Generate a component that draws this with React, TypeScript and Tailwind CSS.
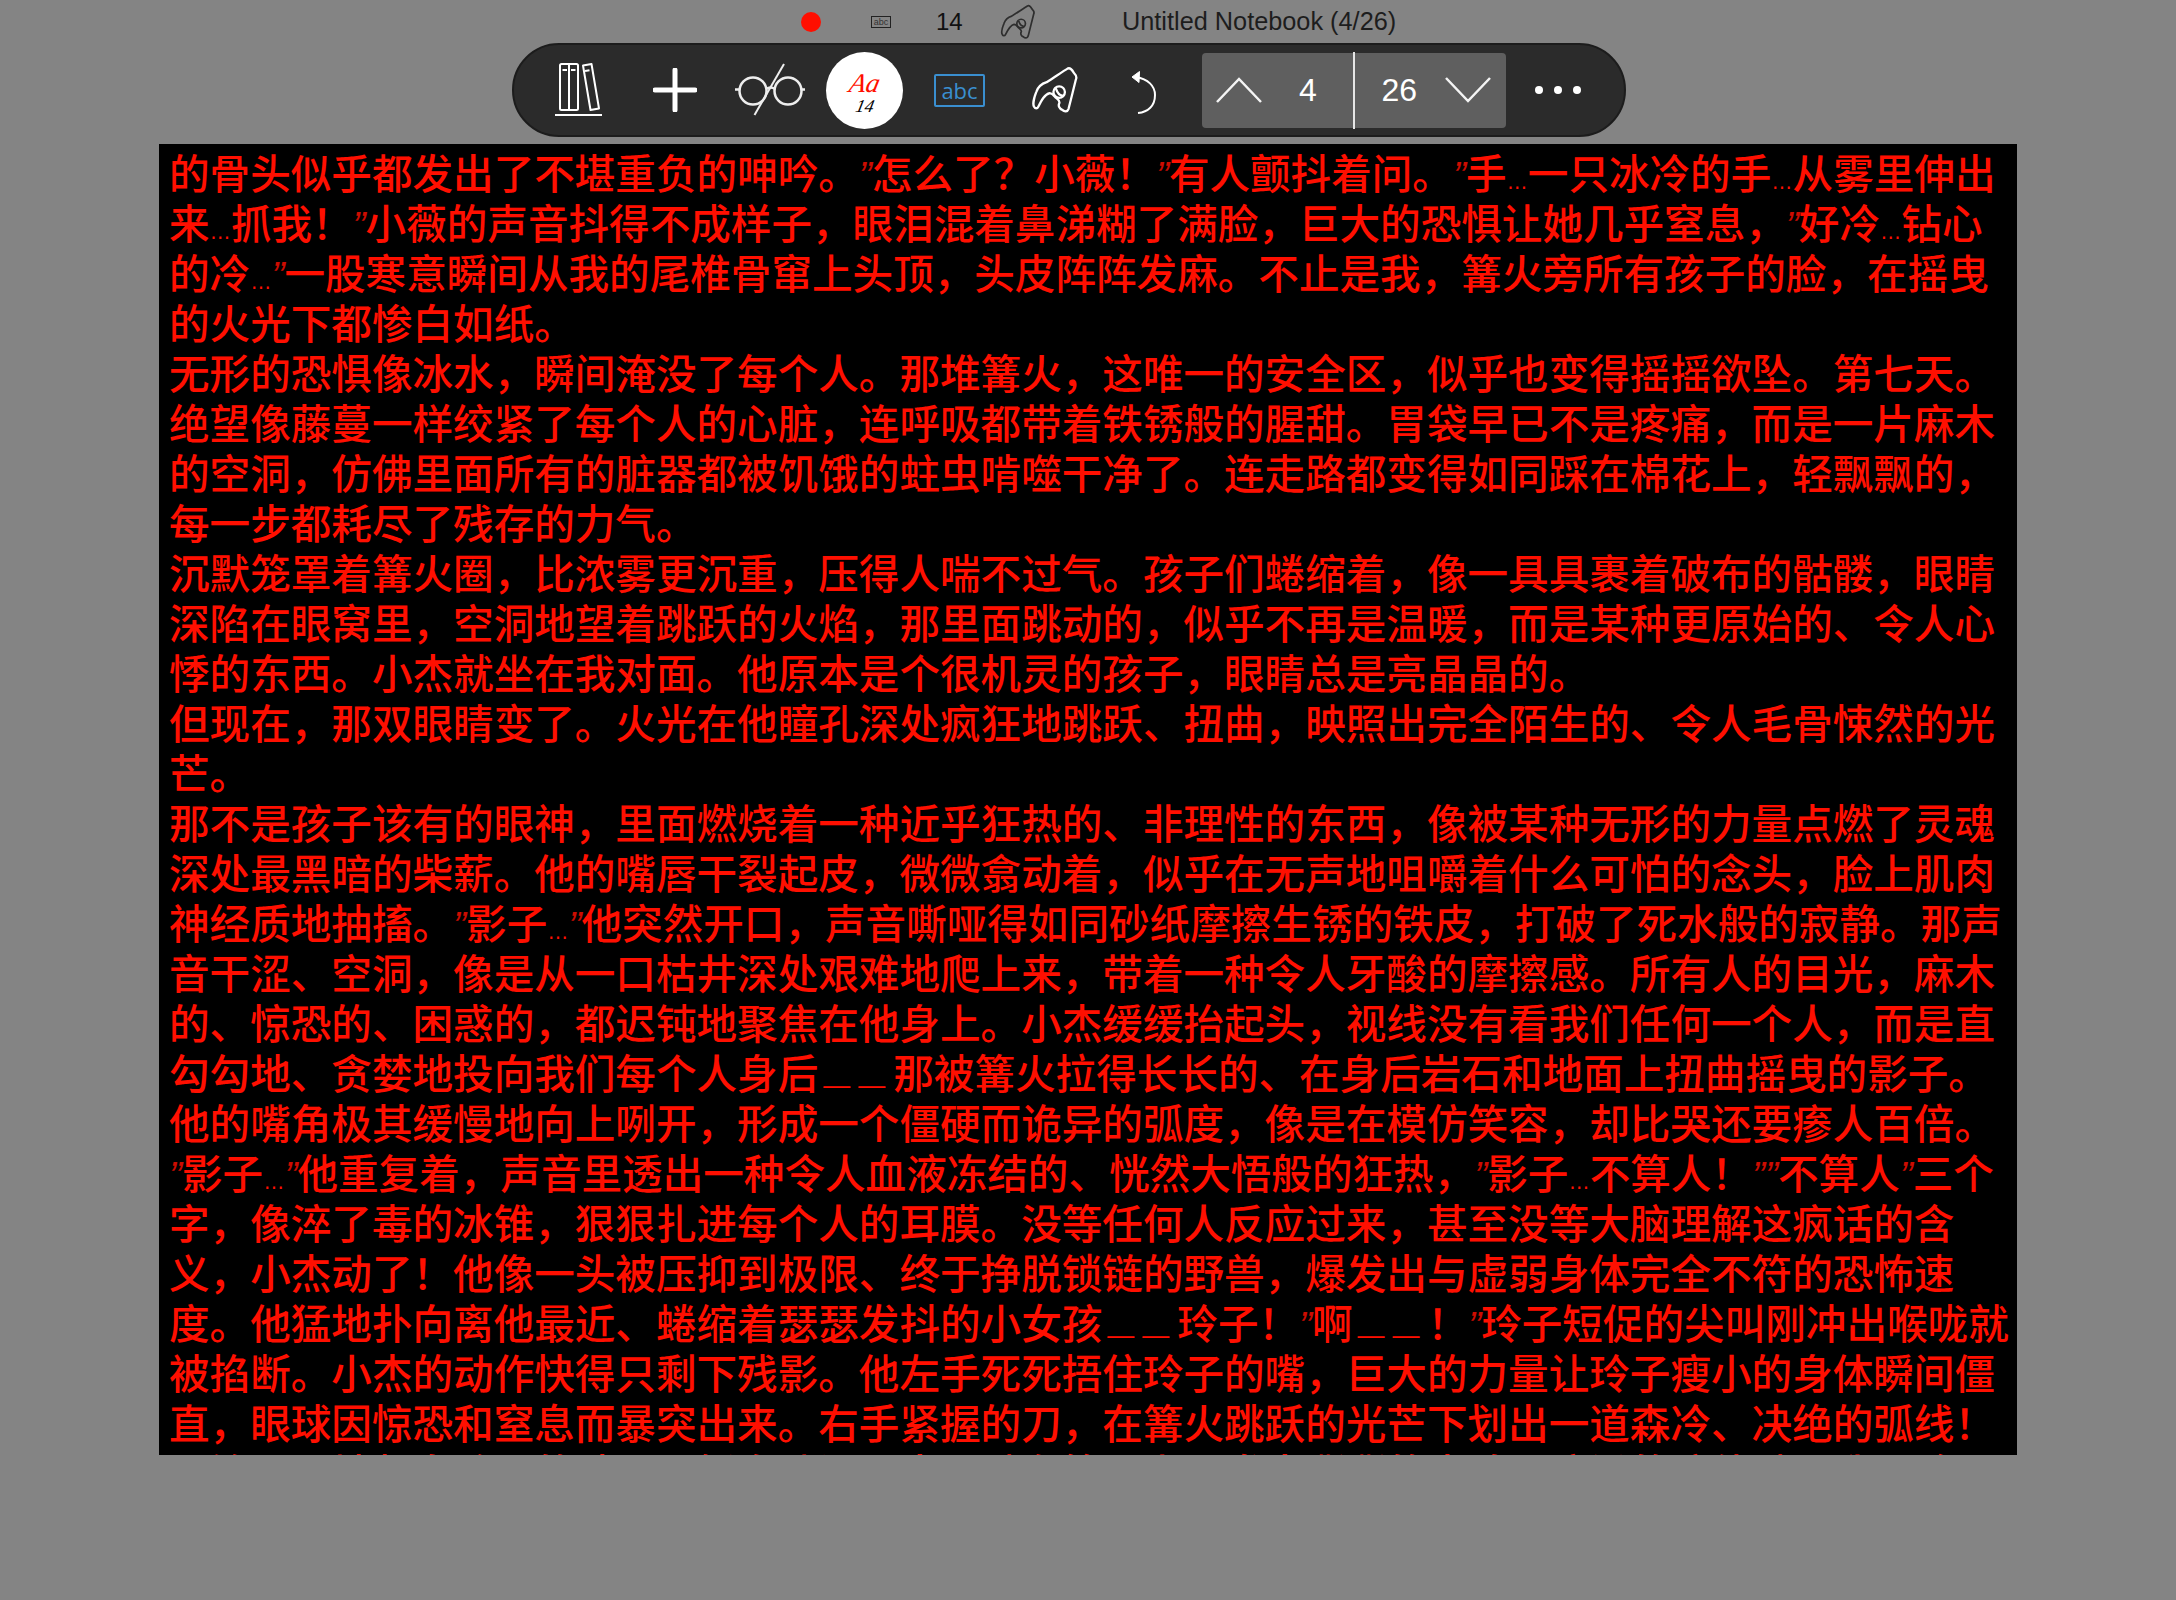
import React from "react";

const LINES = [
  "的骨头似乎都发出了不堪重负的呻吟。“怎么了？小薇！”有人颤抖着问。“手…一只冰冷的手…从雾里伸出",
  "来…抓我！”小薇的声音抖得不成样子，眼泪混着鼻涕糊了满脸，巨大的恐惧让她几乎窒息，“好冷…钻心",
  "的冷…”一股寒意瞬间从我的尾椎骨窜上头顶，头皮阵阵发麻。不止是我，篝火旁所有孩子的脸，在摇曳",
  "的火光下都惨白如纸。",
  "无形的恐惧像冰水，瞬间淹没了每个人。那堆篝火，这唯一的安全区，似乎也变得摇摇欲坠。第七天。",
  "绝望像藤蔓一样绞紧了每个人的心脏，连呼吸都带着铁锈般的腥甜。胃袋早已不是疼痛，而是一片麻木",
  "的空洞，仿佛里面所有的脏器都被饥饿的蛀虫啃噬干净了。连走路都变得如同踩在棉花上，轻飘飘的，",
  "每一步都耗尽了残存的力气。",
  "沉默笼罩着篝火圈，比浓雾更沉重，压得人喘不过气。孩子们蜷缩着，像一具具裹着破布的骷髅，眼睛",
  "深陷在眼窝里，空洞地望着跳跃的火焰，那里面跳动的，似乎不再是温暖，而是某种更原始的、令人心",
  "悸的东西。小杰就坐在我对面。他原本是个很机灵的孩子，眼睛总是亮晶晶的。",
  "但现在，那双眼睛变了。火光在他瞳孔深处疯狂地跳跃、扭曲，映照出完全陌生的、令人毛骨悚然的光",
  "芒。",
  "那不是孩子该有的眼神，里面燃烧着一种近乎狂热的、非理性的东西，像被某种无形的力量点燃了灵魂",
  "深处最黑暗的柴薪。他的嘴唇干裂起皮，微微翕动着，似乎在无声地咀嚼着什么可怕的念头，脸上肌肉",
  "神经质地抽搐。“影子…”他突然开口，声音嘶哑得如同砂纸摩擦生锈的铁皮，打破了死水般的寂静。那声",
  "音干涩、空洞，像是从一口枯井深处艰难地爬上来，带着一种令人牙酸的摩擦感。所有人的目光，麻木",
  "的、惊恐的、困惑的，都迟钝地聚焦在他身上。小杰缓缓抬起头，视线没有看我们任何一个人，而是直",
  "勾勾地、贪婪地投向我们每个人身后——那被篝火拉得长长的、在身后岩石和地面上扭曲摇曳的影子。",
  "他的嘴角极其缓慢地向上咧开，形成一个僵硬而诡异的弧度，像是在模仿笑容，却比哭还要瘆人百倍。",
  "“影子…”他重复着，声音里透出一种令人血液冻结的、恍然大悟般的狂热，“影子…不算人！”“不算人”三个",
  "字，像淬了毒的冰锥，狠狠扎进每个人的耳膜。没等任何人反应过来，甚至没等大脑理解这疯话的含",
  "义，小杰动了！他像一头被压抑到极限、终于挣脱锁链的野兽，爆发出与虚弱身体完全不符的恐怖速",
  "度。他猛地扑向离他最近、蜷缩着瑟瑟发抖的小女孩——玲子！“啊——！”玲子短促的尖叫刚冲出喉咙就",
  "被掐断。小杰的动作快得只剩下残影。他左手死死捂住玲子的嘴，巨大的力量让玲子瘦小的身体瞬间僵",
  "直，眼球因惊恐和窒息而暴突出来。右手紧握的刀，在篝火跳跃的光芒下划出一道森冷、决绝的弧线！",
  "刀锋狠狠地刺向玲子的脖颈，鲜血喷涌而出，溅在篝火上，发出嘶嘶的声响，滚烫的液体溅了我一脸。",
];

function Line({ text }: { text: string }) {
  const parts = text.split(/(“|”|…|——)/);
  return (
    <div className="h-[50px] whitespace-nowrap leading-[50px]">
      {parts.map((p, i) => {
        if (p === "“" || p === "”")
          return (
            <span key={i} className="font-['Liberation_Sans'] text-[39px] font-normal italic opacity-80">
              ”
            </span>
          );
        if (p === "…")
          return (
            <span key={i} className="font-['Liberation_Sans'] text-[21.3px] font-normal">
              …
            </span>
          );
        if (p === "——")
          return (
            <span key={i} className="inline-block translate-y-[5px] font-['Liberation_Sans'] text-[27px] font-normal leading-[27px]">
              <span className="ml-[5px] mr-[4px]">—</span>
              <span className="ml-[4px] mr-[8px]">—</span>
            </span>
          );
        return <span key={i}>{p}</span>;
      })}
    </div>
  );
}

const Books = () => (
  <svg width="50" height="56" viewBox="0 0 50 56" fill="none" stroke="white" strokeWidth="2">
    <rect x="5" y="2" width="18" height="46" rx="1.5" />
    <path d="M14 2V48" />
    <path d="M7.5 8H12M16 8H20.5" />
    <path d="M28 3.5L36.5 2L44 46.5L35.5 48Z" strokeLinejoin="round" />
    <path d="M30 9L34.5 8.2" />
    <path d="M0 53H47" />
  </svg>
);

const Plus = () => (
  <svg width="44" height="44" viewBox="0 0 44 44" fill="none" stroke="white" strokeWidth="5" strokeLinecap="round">
    <path d="M22 2V42M2 22H42" />
  </svg>
);

const Glasses = () => (
  <svg width="72" height="54" viewBox="0 0 72 54" fill="none" stroke="#eeeeee">
    <circle cx="19" cy="28" r="13.5" strokeWidth="2.5" />
    <circle cx="54" cy="28" r="13.5" strokeWidth="2.5" />
    <path d="M1 26.5H5.5M67.5 26.5H71M32 26C35 24 38 24 41 26" strokeWidth="2.5" />
    <path d="M50 1L20.5 52" strokeWidth="2" />
  </svg>
);

const Hand = ({ color, size }: { color: string; size: number }) => (
  <svg width={size} height={size} viewBox="0 0 46 46" fill="none" stroke={color} strokeWidth="2.2" strokeLinejoin="round" strokeLinecap="round">
    <path d="M3 39C1.5 37 3 30 5 25C7 19 10 17 15 15.5C22 11 31 5 35 2.5C37 1.5 39 3 41 6.5C44 9.5 44 11 43 13C41 21 38 33 36 41C35 44 32 44 30 42C27 41 26 38 27 36C28.5 33 25 32 22.5 29C21 27 20 26 18 26C13 27 10 33 7 39C6 41 4 41 3 39Z" />
    <circle cx="27" cy="25" r="5.5" />
    <path d="M24 22C25 25 27 28 30 28.5" />
  </svg>
);

const Undo = () => (
  <svg width="34" height="48" viewBox="0 0 34 48" fill="none" stroke="white" strokeWidth="2">
    <path d="M6 7C18 9 25 16 25 25C25 36 18 42 8 43" />
    <path d="M9.5 1.5L2 7L9 12.5Z" fill="white" strokeWidth="1" strokeLinejoin="round" />
  </svg>
);

const Chevron = ({ up }: { up: boolean }) => (
  <svg width="46" height="26" viewBox="0 0 46 26" fill="none" stroke="#f4f4f4" strokeWidth="2.5">
    <path d={up ? "M1 25L23 2L45 25" : "M1 1L23 24L45 1"} />
  </svg>
);

export default function App() {
  return (
    <div className="h-[1600px] w-[2176px] overflow-hidden bg-[#848484] font-['Liberation_Sans',sans-serif]">
      <div className="flex h-[43px] items-center pl-[801px] pt-px text-[#111111]">
        <div className="h-5 w-5 rounded-full bg-[#ff0f00]" />
        <div className="ml-[50px] flex h-3 w-5 items-center justify-center border border-[#222222] text-[9px] leading-none text-[#333333]">
          abc
        </div>
        <div className="ml-[45px] w-6 text-center text-[24px] leading-none">14</div>
        <div className="ml-[40px]">
          <Hand color="#2e2e2e" size={36} />
        </div>
        <div className="ml-[86px] text-[25.3px] leading-none text-[#1d1d1d]">Untitled Notebook (4/26)</div>
      </div>

      <div className="ml-[512px] flex h-[94px] w-[1114px] items-center rounded-full border-2 border-[#1c1c1c] bg-[#2b2b2b] pl-[18px]">
        <div className="flex h-full w-[95px] items-center justify-center">
          <Books />
        </div>
        <div className="flex h-full w-[95px] items-center justify-center">
          <Plus />
        </div>
        <div className="flex h-full w-[95px] items-center justify-center">
          <Glasses />
        </div>
        <div className="flex h-full w-[95px] items-center justify-center">
          <div className="flex h-[77px] w-[77px] flex-col items-center justify-center rounded-full bg-white pt-[5px] font-['Liberation_Serif',serif] italic">
            <span className="-skew-x-12 text-[27px] leading-[26px] text-[#ff0f00]">Aa</span>
            <span className="-skew-x-12 text-[18px] leading-[20px] text-black">14</span>
          </div>
        </div>
        <div className="flex h-full w-[95px] items-center justify-center">
          <div className="flex h-[33px] w-[51px] items-center justify-center rounded-[2px] border-2 border-[#3a8fd0] font-['Open_Sans',sans-serif] text-[22px] leading-none text-[#3a8fd0]">
            abc
          </div>
        </div>
        <div className="flex h-full w-[95px] items-center justify-center">
          <Hand color="#ffffff" size={48} />
        </div>
        <div className="flex h-full w-[90px] items-center justify-center pt-[8px]">
          <Undo />
        </div>
        <div className="ml-[10px] flex h-[75px] w-[304px] items-stretch rounded-[4px] bg-[#5f5f5f] text-[32px] text-white">
          <div className="flex flex-1 items-center pl-[14px]">
            <Chevron up={true} />
            <span className="ml-[37px] leading-none">4</span>
          </div>
          <div className="my-[-1px] w-0.5 bg-[#e6e6e6]" />
          <div className="flex flex-1 items-center justify-end pr-[15px]">
            <span className="mr-[28px] leading-none">26</span>
            <Chevron up={false} />
          </div>
        </div>
        <div className="ml-[4px] flex h-full w-[95px] items-center justify-center gap-[11px]">
          <div className="h-2 w-2 rounded-full bg-white" />
          <div className="h-2 w-2 rounded-full bg-white" />
          <div className="h-2 w-2 rounded-full bg-white" />
        </div>
      </div>

      <div className="ml-[159px] mt-[7px] h-[1311px] w-[1858px] overflow-hidden bg-black pl-[10px] pt-[3px] font-['Noto_Sans_CJK_SC',sans-serif] text-[40.6px] font-medium text-[#ff0f00] [text-spacing-trim:space-all]">
        {LINES.map((l, i) => (
          <Line key={i} text={l} />
        ))}
      </div>
    </div>
  );
}
